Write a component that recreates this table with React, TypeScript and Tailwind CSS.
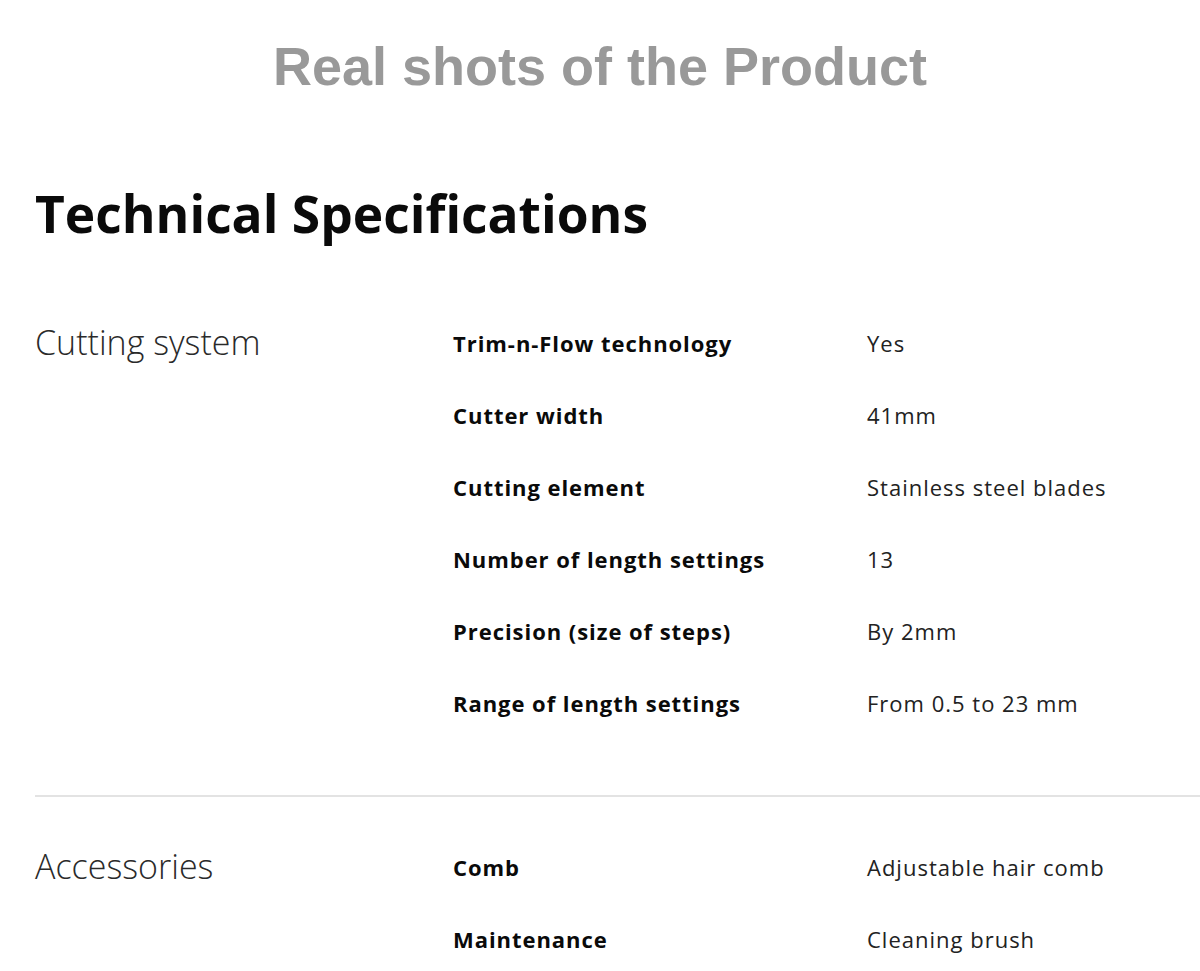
const specs = [
  {
    group: "Cutting system",
    rows: [
      ["Trim-n-Flow technology", "Yes"],
      ["Cutter width", "41mm"],
      ["Cutting element", "Stainless steel blades"],
      ["Number of length settings", "13"],
      ["Precision (size of steps)", "By 2mm"],
      ["Range of length settings", "From 0.5 to 23 mm"],
    ],
  },
  {
    group: "Accessories",
    rows: [
      ["Comb", "Adjustable hair comb"],
      ["Maintenance", "Cleaning brush"],
    ],
  },
];

const App = () => {
  return (
    <div className="w-[1200px] bg-white overflow-hidden">
      <h2 className="pt-[36px] text-center text-[54px] leading-[60px] font-bold text-[#999999] font-['Liberation_Sans',Arial,sans-serif]">
        Real shots of the Product
      </h2>

      <div className="pl-[35px] font-['Open_Sans','Noto_Sans',sans-serif]">
        <h1 className="mt-[85px] text-[51.5px] leading-[64px] font-bold text-[#0a0a0a]">
          Technical Specifications
        </h1>

        <div className="mt-[73px]">
          {specs.map((section, i) => (
            <div
              key={section.group}
              className={i > 0 ? "border-t-2 border-[#e3e3e3] pt-[45px]" : ""}
            >
              <div className="flex">
                <div className="w-[418px] text-[34px] leading-[48px] font-light text-[#2a2a2a]">
                  {section.group}
                </div>
                <div className="flex flex-col">
                  {section.rows.map(([k, v]) => (
                    <div key={k} className="flex h-[72px] items-start pt-[11px]">
                      <div className="w-[414px] text-[22px] leading-[28px] font-bold tracking-[0.95px] text-[#0a0a0a]">
                        {k}
                      </div>
                      <div className="text-[22px] leading-[28px] tracking-[1px] text-[#222]">{v}</div>
                    </div>
                  ))}
                </div>
              </div>
              {i === 0 && <div className="h-[45px]" />}
            </div>
          ))}
        </div>
      </div>
    </div>
  );
};

export default App;
